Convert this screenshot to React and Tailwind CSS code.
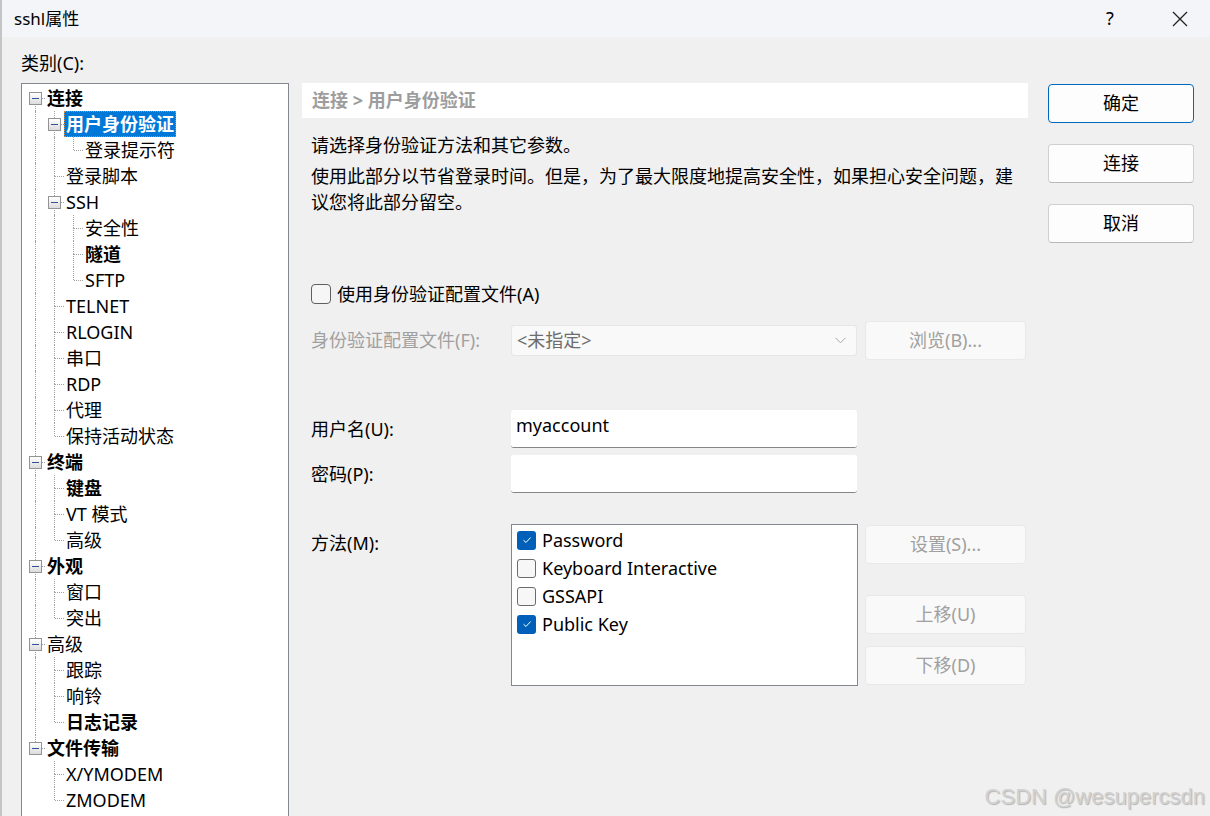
import React from "react";

const TREE = [
  {
    t: "连接", b: true, c: [
      { t: "用户身份验证", b: true, sel: true, c: [{ t: "登录提示符" }] },
      { t: "登录脚本" },
      { t: "SSH", c: [{ t: "安全性" }, { t: "隧道", b: true }, { t: "SFTP" }] },
      { t: "TELNET" },
      { t: "RLOGIN" },
      { t: "串口" },
      { t: "RDP" },
      { t: "代理" },
      { t: "保持活动状态" },
    ],
  },
  { t: "终端", b: true, c: [{ t: "键盘", b: true }, { t: "VT 模式" }, { t: "高级" }] },
  { t: "外观", b: true, c: [{ t: "窗口" }, { t: "突出" }] },
  { t: "高级", c: [{ t: "跟踪" }, { t: "响铃" }, { t: "日志记录", b: true }] },
  { t: "文件传输", b: true, c: [{ t: "X/YMODEM" }, { t: "ZMODEM" }] },
];

function flatten(nodes, level, guides, out) {
  nodes.forEach((n, i) => {
    const last = i === nodes.length - 1;
    const first = level === 0 && i === 0;
    out.push({ ...n, level, guides, last, first });
    if (n.c) flatten(n.c, level + 1, [...guides, !last], out);
  });
  return out;
}

const ROWS = flatten(TREE, 0, [], []);

function Expander() {
  return (
    <div className="absolute left-[3px] top-[7px] w-[13px] h-[13px] border border-[#939393] bg-linear-to-b from-white to-[#dcdcdc]">
      <div className="absolute left-[2px] right-[2px] top-[5px] h-px bg-[#33509a]" />
    </div>
  );
}

function TreeRow({ row }) {
  return (
    <div className="flex h-[26px]">
      {row.guides.map((g, k) => (
        <div key={k} className="relative w-[19px] h-full shrink-0">
          {g && <div className="absolute left-[9px] top-0 bottom-0 border-l border-dotted border-[#a0a0a0]" />}
        </div>
      ))}
      <div className="relative w-[19px] h-full shrink-0">
        {!row.first && <div className="absolute left-[9px] top-0 h-[13px] border-l border-dotted border-[#a0a0a0]" />}
        {!row.last && <div className="absolute left-[9px] top-[13px] bottom-0 border-l border-dotted border-[#a0a0a0]" />}
        <div className="absolute left-[10px] right-0 top-[13px] border-t border-dotted border-[#a0a0a0]" />
        {row.c && <Expander />}
      </div>
      <span
        className={
          "px-[2px] h-[26px] leading-[26px] whitespace-nowrap " +
          (row.b ? "font-bold " : "") +
          (row.sel ? "bg-[#0078d7] text-white outline outline-dotted outline-[#d8863a] -outline-offset-1" : "text-black")
        }
      >
        {row.t}
      </span>
    </div>
  );
}

function Check({ on }) {
  if (on) {
    return (
      <div className="w-[19px] h-[19px] rounded-[3px] bg-[#005fb8] flex items-center justify-center shrink-0">
        <svg width="10" height="8" viewBox="0 0 10 8">
          <path d="M1.5 4.2 L4 6.5 L8.6 1.5" fill="none" stroke="white" strokeWidth="1" />
        </svg>
      </div>
    );
  }
  return <div className="w-[19px] h-[19px] rounded-[3px] border border-[#6b6b6b] bg-[#f7f7f7] shrink-0" />;
}

function DisabledButton({ children }) {
  return (
    <div className="w-[161px] h-[39px] rounded-[4px] border border-[#e8e8e8] bg-[#f9f9f9] flex items-center justify-center text-[#a0a0a0]">
      {children}
    </div>
  );
}

function SideButton({ children, primary }) {
  return (
    <div
      className={
        "w-[146px] h-[39px] rounded-[4px] bg-[#fdfdfd] flex items-center justify-center text-black border " +
        (primary ? "border-[#0067c0]" : "border-[#d0d0d0] border-b-[#b8b8b8]")
      }
    >
      {children}
    </div>
  );
}

export default function App() {
  return (
    <div className="relative w-[1210px] h-[816px] overflow-hidden bg-[#f0f0f0] text-[18px] text-black font-['Noto_Sans','Noto_Sans_CJK_SC',sans-serif]">
      {/* title bar */}
      <div className="h-[37px] bg-[#f3f5f8] flex items-center">
        <div className="pl-[14px] text-[17px] leading-[24px] flex-1">sshl属性</div>
        <div className="w-[40px] text-center text-[18px] mr-[30px]">?</div>
        <div className="w-[40px] flex justify-center mr-[10px]">
          <svg width="16" height="16" viewBox="0 0 16 16">
            <path d="M1 1 L15 15 M15 1 L1 15" stroke="#222" strokeWidth="1.3" />
          </svg>
        </div>
      </div>

      <div className="flex">
        {/* left: category tree */}
        <div className="ml-[21px] w-[268px] shrink-0">
          <div className="pt-[14px] pb-[8px] leading-[24px]">类别(C):</div>
          <div className="h-[740px] bg-white border border-[#828790] pt-px pl-[4px]">
            {ROWS.map((r, i) => (
              <TreeRow key={i} row={r} />
            ))}
          </div>
        </div>

        {/* middle panel */}
        <div className="ml-[13px] w-[726px] shrink-0 pt-[46px]">
          <div className="h-[35px] bg-white pl-[10px] flex items-center font-bold text-[#9d9d9d]">
            连接 &gt; 用户身份验证
          </div>
          <div className="ml-[9px] w-[710px] mt-[14px] leading-[26px]">请选择身份验证方法和其它参数。</div>
          <div className="ml-[9px] w-[710px] mt-[5px] leading-[26px]">
            使用此部分以节省登录时间。但是，为了最大限度地提高安全性，如果担心安全问题，建议您将此部分留空。
          </div>

          <div className="ml-[9px] mt-[66px] h-[26px] flex items-center gap-[6px]">
            <div className="w-[20px] h-[20px] rounded-[4px] border border-[#5f5f5f] bg-[#f6f6f6]" />
            <span className="leading-[26px]">使用身份验证配置文件(A)</span>
          </div>

          <div className="mt-[14px] h-[39px] flex items-center">
            <div className="ml-[9px] w-[200px] text-[#a0a0a0]">身份验证配置文件(F):</div>
            <div className="w-[346px] h-[31px] bg-[#f9f9f9] border border-[#e6e6e6] rounded-[3px] flex items-center pl-[5px] pr-[10px] text-[#6d6d6d]">
              <span className="flex-1">&lt;未指定&gt;</span>
              <svg width="11" height="7" viewBox="0 0 11 7">
                <path d="M0.5 0.8 L5.5 5.8 L10.5 0.8" fill="none" stroke="#a8a8a8" strokeWidth="1" />
              </svg>
            </div>
            <div className="ml-[8px]">
              <DisabledButton>浏览(B)...</DisabledButton>
            </div>
          </div>

          <div className="mt-[50px] h-[38px] flex items-center">
            <div className="ml-[9px] w-[200px]">用户名(U):</div>
            <div className="w-[346px] h-[38px] bg-white border-b border-[#868686] rounded-[3px] pl-[5px] pt-[2px] leading-[26px]">
              myaccount
            </div>
          </div>

          <div className="mt-[7px] h-[38px] flex items-center">
            <div className="ml-[9px] w-[200px]">密码(P):</div>
            <div className="w-[346px] h-[38px] bg-white border-b border-[#868686] rounded-[3px]" />
          </div>

          <div className="mt-[31px] flex items-start">
            <div className="ml-[9px] w-[200px] mt-[6px] leading-[26px]">方法(M):</div>
            <div className="w-[347px] h-[162px] bg-white border border-[#828790] pt-[1px] pl-[5px]">
              {[
                ["Password", true],
                ["Keyboard Interactive", false],
                ["GSSAPI", false],
                ["Public Key", true],
              ].map(([label, on]) => (
                <div key={label} className="h-[28px] flex items-center gap-[6px]">
                  <Check on={on} />
                  <span className="leading-[28px]">{label}</span>
                </div>
              ))}
            </div>
            <div className="ml-[7px] flex flex-col">
              <div className="mt-px">
                <DisabledButton>设置(S)...</DisabledButton>
              </div>
              <div className="mt-[31px]">
                <DisabledButton>上移(U)</DisabledButton>
              </div>
              <div className="mt-[12px]">
                <DisabledButton>下移(D)</DisabledButton>
              </div>
            </div>
          </div>
        </div>

        {/* right buttons */}
        <div className="ml-[20px] pt-[47px] flex flex-col gap-[21px]">
          <SideButton primary>确定</SideButton>
          <SideButton>连接</SideButton>
          <SideButton>取消</SideButton>
        </div>
      </div>

      {/* left screen edge */}
      <div className="absolute left-0 top-0 bottom-0 w-[2px] bg-[#c4c4c4]" />

      {/* watermark */}
      <div className="absolute right-[5px] bottom-[6px] text-[22px] leading-[26px] text-[#d2d2d2] font-['Liberation_Sans',sans-serif] [text-shadow:1px_1px_1px_rgba(0,0,0,0.25)]">
        CSDN @wesupercsdn
      </div>
    </div>
  );
}
